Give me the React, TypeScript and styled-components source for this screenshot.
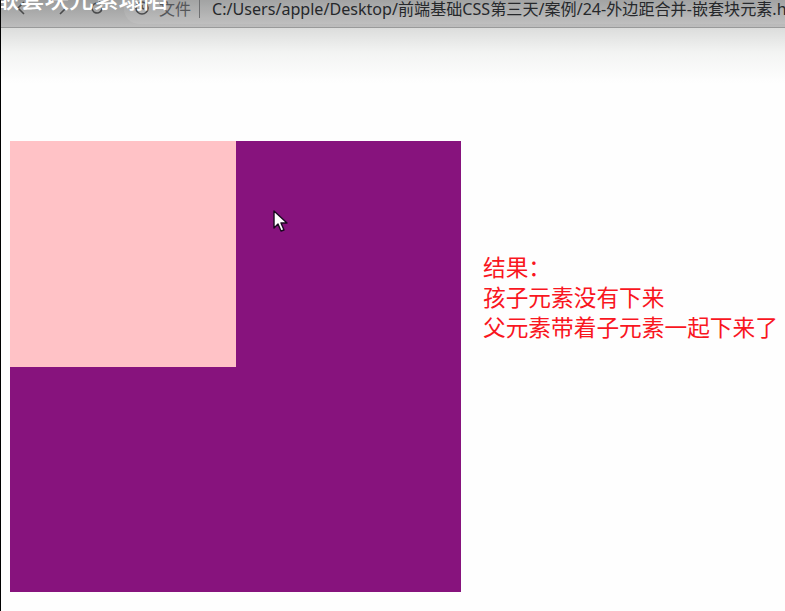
import React from "react";
import styled, { createGlobalStyle } from "styled-components";

const Global = createGlobalStyle`
  html, body { margin: 0; padding: 0; background: #fefefe; overflow: hidden; }
  #root { width: 785px; height: 611px; }
`;

const Page = styled.div`
  width: 785px;
  height: 611px;
  box-sizing: border-box;
  border-left: 1px solid #000;
  display: flex;
  flex-direction: column;
  position: relative;
  overflow: hidden;
  font-family: "Noto Sans", "Noto Sans CJK SC", sans-serif;
`;

const Toolbar = styled.div`
  height: 28px;
  flex: none;
  box-sizing: border-box;
  border-bottom: 1px solid #999a9a;
  background: linear-gradient(#9a9b9b 0%, #bdbdbd 100%);
  display: flex;
  align-items: flex-start;
  padding-left: 13px;
  overflow: hidden;
  white-space: nowrap;
`;

const NavIcon = styled.svg<{ $gap?: number }>`
  width: 16px;
  height: 16px;
  flex: none;
  margin-top: 0;
  margin-left: ${(p) => p.$gap ?? 0}px;
  fill: none;
  stroke: #4a4b4c;
  stroke-width: 1.6;
`;

const Omnibox = styled.div`
  flex: 1;
  height: 24px;
  margin: 0 0 0 19px;
  padding-left: 10px;
  border-radius: 0 0 0 15px;
  background: rgba(255, 255, 255, 0.09);
  display: flex;
  align-items: flex-start;
  overflow: hidden;
`;

const SchemeLabel = styled.span`
  font-size: 16px;
  line-height: 18px;
  color: #55575a;
  margin: 0 0 0 9px;
  padding-right: 8px;
  border-right: 1px solid #6f7072;
  flex: none;
`;

const Address = styled.span`
  font-size: 16.1px;
  line-height: 18px;
  color: #26282b;
  margin: 0 0 0 12px;
  flex: none;
`;

const Fade = styled.div`
  height: 55px;
  flex: none;
  background: linear-gradient(#dcdddc 0%, #f3f4f3 45%, #fefefe 100%);
`;

const Title = styled.div`
  position: absolute;
  left: -6px;
  top: -18px;
  font-size: 24.7px;
  font-weight: 500;
  line-height: 30px;
  color: #fff;
  white-space: nowrap;
  font-family: "Noto Sans CJK SC", sans-serif;
`;

const Content = styled.div`
  flex: 1;
  display: flex;
  align-items: flex-start;
  gap: 22px;
  padding: 58px 0 0 9px;
  box-sizing: border-box;
`;

const Parent = styled.div`
  width: 451px;
  height: 451px;
  flex: none;
  background: #87137d;
  position: relative;
`;

const Child = styled.div`
  width: 226px;
  height: 226px;
  background: #ffc2c6;
`;

const Cursor = styled.svg`
  position: absolute;
  left: 263px;
  top: 69px;
  width: 15px;
  height: 23px;
`;

const Note = styled.div`
  color: #f9161f;
  font-size: 22.7px;
  line-height: 30px;
  margin-top: 111px;
  font-family: "Noto Sans CJK SC", sans-serif;
  white-space: nowrap;
`;

export default function App() {
  return (
    <>
      <Global />
      <Page>
        <Toolbar>
          <NavIcon viewBox="0 0 16 16"><path d="M10 2 4 8l6 6" /></NavIcon>
          <NavIcon viewBox="0 0 16 16" $gap={24}><path d="m6 2 6 6-6 6" /></NavIcon>
          <NavIcon viewBox="0 0 16 16" $gap={19}><path d="M13 8a5 5 0 1 1-2-4M11 1v3.5H7.5" /></NavIcon>
          <Omnibox>
            <NavIcon viewBox="0 0 16 16"><circle cx="8" cy="8" r="6" /><path d="M8 5v3l2 1" /></NavIcon>
            <SchemeLabel>文件</SchemeLabel>
            <Address>C:/Users/apple/Desktop/前端基础CSS第三天/案例/24-外边距合并-嵌套块元素.html</Address>
          </Omnibox>
        </Toolbar>
        <Fade />
        <Title>嵌套块元素塌陷</Title>
        <Content>
          <Parent>
            <Child />
            <Cursor viewBox="0 0 15 23">
              <path d="M1 1v17l4-4 3 7 3-1-3-7h6z" fill="#fff" stroke="#1a0a20" strokeWidth="1.4" strokeLinejoin="round" />
            </Cursor>
          </Parent>
          <Note>
            结果：<br />
            孩子元素没有下来<br />
            父元素带着子元素一起下来了
          </Note>
        </Content>
      </Page>
    </>
  );
}
